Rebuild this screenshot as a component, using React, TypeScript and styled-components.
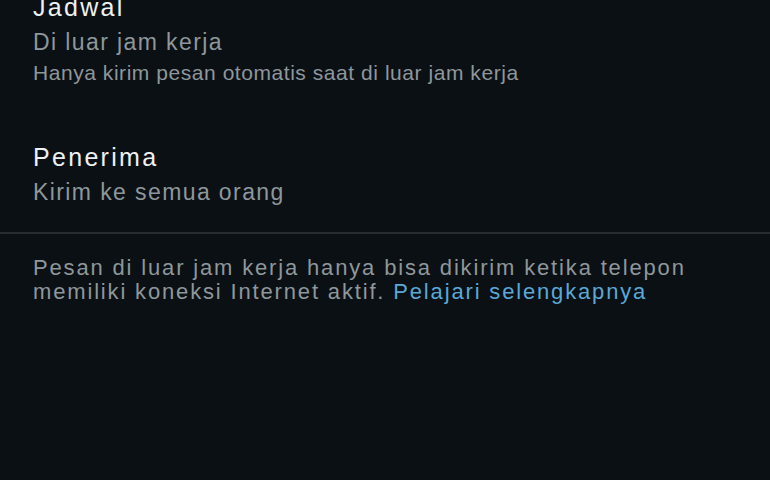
import React from 'react';
import styled, { createGlobalStyle } from 'styled-components';

const GlobalStyle = createGlobalStyle`
    html, body {
        margin: 0;
        padding: 0;
        background: #0b1014;
    }
`;

const Screen = styled.div`
    width: 770px;
    height: 480px;
    overflow: hidden;
    background: #0b1014;
    font-family: 'Liberation Sans', Arial, sans-serif;
`;

// list is scrolled a little, so the first title is cut at the top
const Scroller = styled.div`
    display: flex;
    flex-direction: column;
    margin-top: -10px;
`;

const Section = styled.div`
    display: flex;
    flex-direction: column;
    gap: 54px;
    padding-bottom: 22px;
`;

const Item = styled.div`
    display: flex;
    flex-direction: column;
    padding: 0 33px;
`;

const Title = styled.div`
    color: #eef1f2;
    font-size: 25px;
    line-height: 34px;
    letter-spacing: 2.3px;
`;

const Value = styled.div`
    color: #8e979b;
    font-size: 23px;
    line-height: 36px;
    letter-spacing: 1.4px;
`;

const Hint = styled.div`
    color: #8e979b;
    font-size: 21px;
    line-height: 26px;
    letter-spacing: 0.55px;
`;

const Divider = styled.div`
    height: 2px;
    background: #262c30;
`;

const Footer = styled.p`
    margin: 22px 0 0;
    padding: 0 33px;
    color: #8e979b;
    font-size: 22px;
    line-height: 23.5px;
    letter-spacing: 1.84px;
`;

const Link = styled.a`
    color: #5aa8d6;
    text-decoration: none;
`;

const App = () => (
    <Screen>
        <GlobalStyle />
        <Scroller>
            <Section>
                <Item>
                    <Title>Jadwal</Title>
                    <Value>Di luar jam kerja</Value>
                    <Hint>Hanya kirim pesan otomatis saat di luar jam kerja</Hint>
                </Item>
                <Item>
                    <Title>Penerima</Title>
                    <Value>Kirim ke semua orang</Value>
                </Item>
            </Section>
            <Divider />
            <Footer>
                Pesan di luar jam kerja hanya bisa dikirim ketika telepon memiliki koneksi Internet
                aktif. <Link href="#">Pelajari selengkapnya</Link>
            </Footer>
        </Scroller>
    </Screen>
);

export default App;
